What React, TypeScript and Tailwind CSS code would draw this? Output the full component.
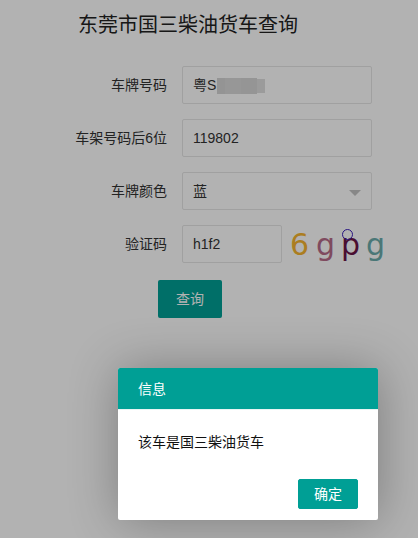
import React from "react";

const font = { fontFamily: '"Liberation Sans", "Noto Sans CJK SC", sans-serif' };

function Row({ label, children, h = "h-[38px]" }: { label: string; children: React.ReactNode; h?: string }) {
  return (
    <div className={`flex items-start ${h} mb-[15px]`}>
      <label className="w-[110px] shrink-0 pr-[15px] text-right text-[14px] leading-[20px] py-[9px] text-[#333]">
        {label}
      </label>
      {children}
    </div>
  );
}

export default function App() {
  return (
    <div className="relative w-[418px] h-[538px] bg-white overflow-hidden" style={font}>
      <div className="pl-[72px]">
        <h2 className="ml-[6px] pt-[11px] text-[20px] leading-[28px] font-normal text-[#222]">东莞市国三柴油货车查询</h2>
        <div className="mt-[27px]">
          <Row label="车牌号码">
            <div className="w-[190px] h-[38px] border border-[#e6e6e6] rounded-[2px] bg-white pl-[10px] flex items-center text-[14px] text-[#333]">
              <span>粤S</span>
              <span className="inline-flex h-[16px] ml-[1px] mt-[1px]">
                <span className="w-[8px] h-[16px] bg-[#d4d4d4]" />
                <span className="w-[16px] h-[16px] bg-[#d9d9d9]" />
                <span className="w-[16px] h-[16px] bg-[#d6d6d6]" />
                <span className="w-[8px] h-[14px] mt-[1px] bg-[#dedede]" />
              </span>
            </div>
          </Row>
          <Row label="车架号码后6位">
            <div className="w-[190px] h-[38px] border border-[#e6e6e6] rounded-[2px] bg-white pl-[10px] flex items-center text-[14px] text-[#333]">
              119802
            </div>
          </Row>
          <Row label="车牌颜色">
            <div className="w-[190px] h-[38px] border border-[#e6e6e6] rounded-[2px] bg-white pl-[10px] pr-[10px] flex items-center justify-between text-[14px] text-[#333]">
              <span>蓝</span>
              <span className="w-0 h-0 border-x-[6px] border-x-transparent border-t-[6px] border-t-[#c2c2c2] mt-[3px]" />
            </div>
          </Row>
          <Row label="验证码" h="h-[40px]">
            <div className="flex items-start">
              <div className="w-[100px] h-[38px] border border-[#e6e6e6] rounded-[2px] bg-white pl-[10px] flex items-center text-[14px] text-[#333]">
                h1f2
              </div>
              <div
                className="relative ml-[8px] flex h-[40px] text-[30px] leading-[40px]"
                style={{ fontFamily: '"DejaVu Sans", sans-serif' }}
              >
                <span className="w-[26px] text-[#f5b42e]">6</span>
                <span className="w-[25px] text-[#b76b88]">g</span>
                <span className="w-[25px] text-[#6b1547]">p</span>
                <span className="w-[25px] text-[#6babab]">g</span>
                <span className="absolute left-[52px] top-[4px] w-[11px] h-[11px] rounded-full border border-[#391dba]" />
              </div>
            </div>
          </Row>
          <div className="ml-[86px]">
            <button className="h-[38px] px-[18px] rounded-[2px] bg-[#009f95] text-white text-[14px] leading-[38px]">
              查询
            </button>
          </div>
        </div>
      </div>

      <div className="absolute inset-0 bg-black/30" />

      <div className="absolute left-[118px] top-[368px] w-[260px] h-[152px] bg-white rounded-[2px] shadow-[1px_1px_50px_rgba(0,0,0,0.3)] flex flex-col">
        <div className="h-[42px] bg-[#009f95] border-b border-[#e8f5f4] rounded-t-[2px] pl-[20px] text-white text-[14px] leading-[42px]">
          信息
        </div>
        <div className="flex-1 px-[20px] py-[20px] text-[14px] leading-[24px] text-[#111]">该车是国三柴油货车</div>
        <div className="flex justify-end pr-[20px] pb-[11px]">
          <button className="h-[30px] px-[15px] border border-[#009f95] bg-[#009f95] rounded-[2px] text-white text-[14px] leading-[28px]">
            确定
          </button>
        </div>
      </div>
    </div>
  );
}
